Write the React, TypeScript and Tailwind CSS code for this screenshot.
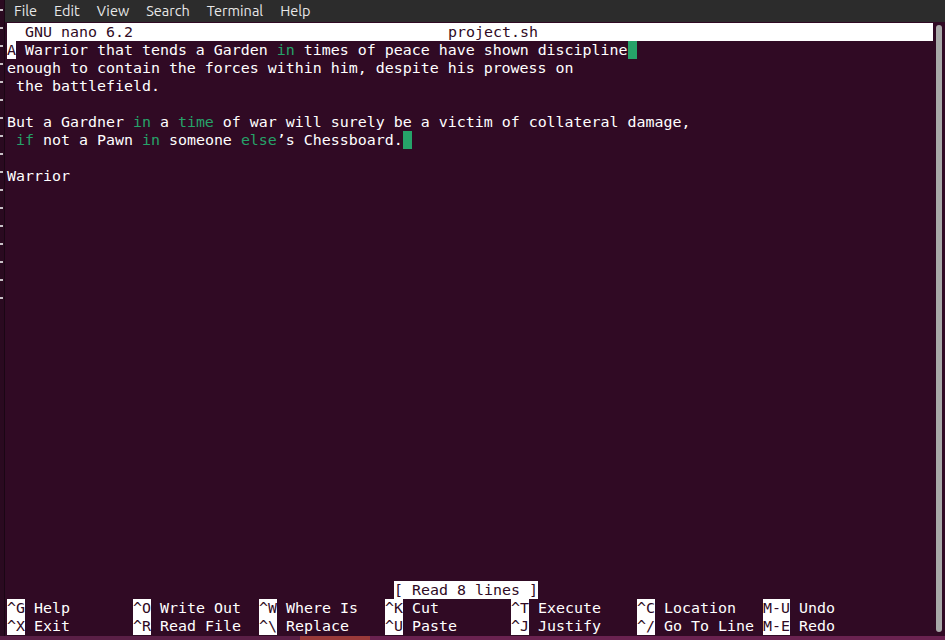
import React from 'react';

type Seg = { t: string; c?: 'g' | 'inv' | 'blk' };

const mono = { fontFamily: '"DejaVu Sans Mono", "Liberation Mono", monospace' };

const lines: Seg[][] = [
  [
    { t: 'A', c: 'inv' },
    { t: ' Warrior that tends a Garden ' },
    { t: 'in', c: 'g' },
    { t: ' times of peace have shown discipline' },
    { t: ' ', c: 'blk' },
  ],
  [{ t: 'enough to contain the forces within him, despite his prowess on' }],
  [{ t: ' the battlefield.' }],
  [],
  [
    { t: 'But a Gardner ' },
    { t: 'in', c: 'g' },
    { t: ' a ' },
    { t: 'time', c: 'g' },
    { t: ' of war will surely be a victim of collateral damage,' },
  ],
  [
    { t: ' ' },
    { t: 'if', c: 'g' },
    { t: ' not a Pawn ' },
    { t: 'in', c: 'g' },
    { t: ' someone ' },
    { t: 'else', c: 'g' },
    { t: '’s Chessboard.' },
    { t: ' ', c: 'blk' },
  ],
  [],
  [{ t: 'Warrior' }],
];

const shortcuts: [string, string][][] = [
  [
    ['^G', 'Help'],
    ['^O', 'Write Out'],
    ['^W', 'Where Is'],
    ['^K', 'Cut'],
    ['^T', 'Execute'],
    ['^C', 'Location'],
    ['M-U', 'Undo'],
  ],
  [
    ['^X', 'Exit'],
    ['^R', 'Read File'],
    ['^\\', 'Replace'],
    ['^U', 'Paste'],
    ['^J', 'Justify'],
    ['^/', 'Go To Line'],
    ['M-E', 'Redo'],
  ],
];

const segClass = (c?: Seg['c']) => {
  if (c === 'g') return 'text-[#26a269]';
  if (c === 'inv') return 'bg-white text-[#300a24]';
  if (c === 'blk') return 'bg-[#26a269]';
  return '';
};

function Row({ children }: { children?: React.ReactNode }) {
  return <div className="h-[18px] leading-[19px] whitespace-pre">{children}</div>;
}

export default function App() {
  const menu = ['File', 'Edit', 'View', 'Search', 'Terminal', 'Help'];
  const emptyRows = Array.from({ length: 22 });

  return (
    <div className="w-[945px] h-[640px] overflow-hidden bg-[#4a1238] flex flex-col">
      <div className="flex h-[636px]">
        {/* desktop strip on the left */}
        <div className="w-[5px] bg-[#2a0a20] border-r border-[#1a0614] flex flex-col pt-[9px] gap-[16px]">
          {Array.from({ length: 17 }).map((_, i) => (
            <div key={i} className="w-[3px] h-[2px] bg-[#c8c0c6]" />
          ))}
        </div>

        {/* terminal window */}
        <div className="flex-1 flex flex-col">
          <div
            className="h-[22px] bg-[#2c2c2c] flex items-center gap-[17px] pl-[9px] text-[14.5px] text-[#e8e8e8]"
            style={{ fontFamily: 'Ubuntu, "Noto Sans", "Liberation Sans", sans-serif' }}
          >
            {menu.map((m) => (
              <span key={m}>{m}</span>
            ))}
          </div>

          <div className="flex-1 bg-[#300a24] flex">
            <div className="flex-1 pl-[2px] pt-[1px] text-white text-[14.95px]" style={mono}>
              {/* title bar */}
              <div className="h-[18px] leading-[19px] w-[926px] bg-white text-[#300a24] whitespace-pre flex">
                <span className="w-[441px]">{'  GNU nano 6.2'}</span>
                <span>project.sh</span>
              </div>

              {lines.map((segs, i) => (
                <Row key={i}>
                  {segs.map((s, j) => (
                    <span key={j} className={segClass(s.c)}>
                      {s.t}
                    </span>
                  ))}
                </Row>
              ))}

              {emptyRows.map((_, i) => (
                <Row key={'e' + i} />
              ))}

              <Row>
                <span className="inline-block w-[387px]" />
                <span className="bg-white text-[#300a24]">{'[ Read 8 lines ]'}</span>
              </Row>

              {shortcuts.map((row, i) => (
                <div key={i} className="h-[18px] leading-[19px] whitespace-pre flex">
                  {row.map(([k, label]) => (
                    <div key={k} className="w-[126px] shrink-0">
                      <span className="bg-white text-[#300a24]">{k}</span>
                      <span>{' ' + label}</span>
                    </div>
                  ))}
                </div>
              ))}
            </div>

            {/* scrollbar */}
            <div className="w-[12px] flex justify-center pt-[3px] pb-[4px]">
              <div className="w-[6px] rounded-full bg-[#a8a8a8]" />
            </div>
          </div>
        </div>
      </div>

      {/* desktop behind, bottom */}
      <div className="h-[4px] flex">
        <div className="w-[300px] bg-[#5a1f46]" />
        <div className="w-[70px] bg-[#9a3a3a]" />
        <div className="flex-1 bg-[#6a2250]" />
      </div>
    </div>
  );
}
